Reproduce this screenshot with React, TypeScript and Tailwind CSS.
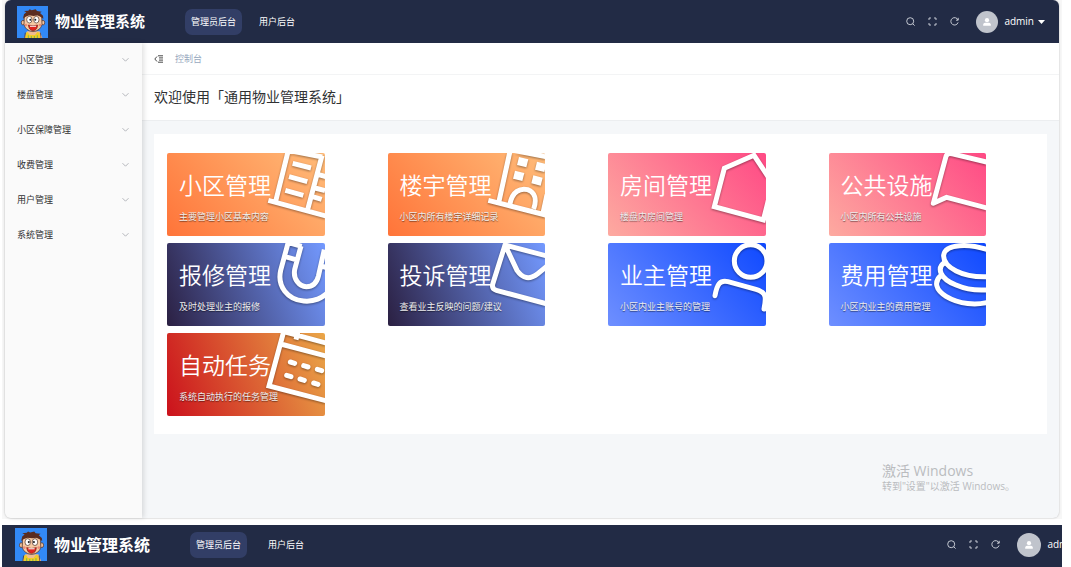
import React from 'react';
import clsx from 'clsx';

const menus = ['小区管理', '楼盘管理', '小区保障管理', '收费管理', '用户管理', '系统管理'];

const ORANGE = 'bg-[linear-gradient(50deg,#ff7439,#ffbc79)]';
const PINK = 'bg-[linear-gradient(50deg,#fdaaa0,#ff4a85)]';
const NIGHT = 'bg-[linear-gradient(70deg,#2b2042,#7399ff)]';
const BLUE = 'bg-[linear-gradient(50deg,#6e8fff,#0f49ff)]';
const RED = 'bg-[linear-gradient(70deg,#cb111c,#eaa648)]';

const cards = [
  {
    title: '小区管理',
    desc: '主要管理小区基本内容',
    color: ORANGE,
    art: (
      <path d="M70-8 33 141M10 142 190 191M70-8 172 12M171 8 128 170M83 31l55 14M72 71l55 15M61 112l54 15M158 64l30 8M150 105l30 8M140 130l30 9" />
    ),
  },
  {
    title: '楼宇管理',
    desc: '小区内所有楼宇详细记录',
    color: ORANGE,
    art: (
      <>
        <path d="M76-10 42 145M10 142 190 188M75-10 190 12M186 125l-12 55M75 152C82 116 106 104 128 110 150 118 156 140 146 168" />
        <g fill="white" stroke="none">
          <path d="m102 12 28 7-6 24-28-7zM156 26l28 7-6 24-28-7zM90 53l28 7-6 24-28-7zM145 67l28 7-6 24-28-7z" />
        </g>
      </>
    ),
  },
  {
    title: '房间管理',
    desc: '楼盘内房间管理',
    color: PINK,
    art: <path d="M55 46 144 7 200 92 172 201 25 161z" />,
  },
  {
    title: '公共设施',
    desc: '小区内所有公共设施',
    color: PINK,
    art: <path strokeLinejoin="round" d="M190 29 76 2Q64 0 60 10L22 151 62 133 190 167" />,
  },
  {
    title: '报修管理',
    desc: '及时处理业主的报修',
    color: NIGHT,
    art: (
      <path d="M70-3 47 82C36 130 68 170 116 174 150 177 170 165 190 148M108 9 89 80C84 108 102 130 124 131 146 131 156 116 160 100L178 20M58 40l42 12M68-2l42 12M164 68l26 7" />
    ),
  },
  {
    title: '投诉管理',
    desc: '查看业主反映的问题/建议',
    color: NIGHT,
    art: <path strokeLinejoin="round" d="M190 40 60 6 23 124Q20 138 34 142L190 184M60 6 96 82Q122 120 158 92L190 66" />,
  },
  {
    title: '业主管理',
    desc: '小区内业主账号的管理',
    color: BLUE,
    art: (
      <g strokeLinecap="round">
        <circle cx="134" cy="54" r="49" />
        <path d="M27 158C33 124 42 110 66 116L150 139C184 149 180 166 174 198" />
      </g>
    ),
  },
  {
    title: '费用管理',
    desc: '小区内业主的费用管理',
    color: BLUE,
    art: (
      <path d="M190 22C130 0 58 2 53 36 50 72 110 106 190 101M56 58C32 74 40 106 90 126 120 139 160 143 190 140M44 98C24 116 28 140 60 160 100 184 150 188 190 177" />
    ),
  },
  {
    title: '自动任务',
    desc: '系统自动执行的任务管理',
    color: RED,
    art: (
      <>
        <path d="M56-4 12 159 190 205M56-4 190 32M47 33 190 71M98-2 93 20" />
        <path strokeLinecap="round" strokeWidth="15" d="M76 87l13 4M116 98l13 4M157 109l13 4M65 127l13 4M105 138l13 4M146 150l13 4" />
      </>
    ),
  },
];

function Logo({ className }: { className?: string }) {
  return (
    <svg viewBox="0 0 93 96" className={className} preserveAspectRatio="none">
      <rect width="93" height="96" fill="#3289f6" />
      <path d="M30 76h38l8 20H22z" fill="#f0bd92" />
      <path d="M27 80l5-2 6 9h16l7-9 6 2 3 16H24z" fill="#f3cc25" />
      <path d="M25 80l-2 16M70 80l2 16" stroke="#4b2a20" strokeWidth="2" />
      <path d="M34 88v8M43 90v6M52 90v6M61 88v8" stroke="#39a86b" strokeWidth="2" />
      <ellipse cx="18" cy="50" rx="5" ry="7" fill="#f2c29c" stroke="#4b2a20" strokeWidth="2" />
      <ellipse cx="78" cy="50" rx="5" ry="7" fill="#f2c29c" stroke="#4b2a20" strokeWidth="2" />
      <path d="M22 30q26-10 52 0l1 25q-4 19-27 22-23-3-27-22z" fill="#f6c9a3" stroke="#4b2a20" strokeWidth="2" />
      <path d="M18 38l3-13 7-6-7-4 13-1 4-4 6 3 12-3 4 5 14 2-5 4 9 8 1 9-9-6-8-4-12 2-14-2-10 4z" fill="#5b2c20" />
      <ellipse cx="37" cy="41" rx="8" ry="10" fill="white" stroke="#4b2a20" strokeWidth="2" />
      <ellipse cx="58" cy="41" rx="8" ry="10" fill="white" stroke="#4b2a20" strokeWidth="2" />
      <circle cx="40" cy="41" r="3" fill="#222" />
      <circle cx="55" cy="41" r="3" fill="#222" />
      <circle cx="27" cy="57" r="4" fill="#ee8d79" />
      <circle cx="69" cy="57" r="4" fill="#ee8d79" />
      <path d="M34 57q14 5 28 0-1 16-14 17-12-1-14-17z" fill="#e02420" stroke="#7c231a" strokeWidth="2" />
      <path d="M39 59h18v3H39z" fill="white" />
    </svg>
  );
}

function TopBar({ large }: { large?: boolean }) {
  return (
    <header
      className={clsx(
        'flex items-center bg-[#222b45] text-white overflow-hidden',
        large ? 'h-[42px] pb-[3px] pl-[13px]' : 'h-[43px] rounded-t-md pl-3 pr-[14px]'
      )}
    >
      <Logo className={large ? 'w-8 h-[33px] shrink-0' : 'w-[31px] h-8 shrink-0'} />
      <div className={clsx('ml-[7px] font-bold whitespace-nowrap', large ? 'text-[16px]' : 'text-[15px]')}>
        物业管理系统
      </div>
      <nav className={clsx('ml-10 flex items-center text-[9px]', large ? 'gap-[15px]' : 'gap-[11px]')}>
        <button className="h-[26px] px-[6px] rounded-[7px] bg-[#323e66] whitespace-nowrap">管理员后台</button>
        <button className="h-[26px] px-[6px] whitespace-nowrap">用户后台</button>
      </nav>

      <div className={clsx('ml-auto flex items-center shrink-0', large && '-mr-[26px]')}>
        <div className="flex gap-[13px] text-[#d5d8e0]">
          <button aria-label="搜索">
            <svg viewBox="0 0 9 9" className="w-[9px] h-[9px]" fill="none" stroke="currentColor" strokeWidth=".9">
              <circle cx="4.2" cy="4.2" r="3.5" />
              <path d="M6.8 6.8 8.6 8.6" />
            </svg>
          </button>
          <button aria-label="全屏">
            <svg viewBox="0 0 9 9" className="w-[9px] h-[9px]" fill="none" stroke="currentColor" strokeWidth=".9">
              <path d="M1 3V1h2M6 1h2v2M8 6v2H6M3 8H1V6" />
            </svg>
          </button>
          <button aria-label="刷新">
            <svg viewBox="0 0 9 9" className="w-[9px] h-[9px]" fill="none" stroke="currentColor" strokeWidth=".9">
              <path d="M8 3A3.7 3.7 0 1 0 8.1 5.4M8.2.8v2.4H6" />
            </svg>
          </button>
        </div>
        <div
          className={clsx(
            'ml-[17px] rounded-full bg-[#c0c4cc] flex items-center justify-center',
            large ? 'size-6' : 'size-[22px]'
          )}
        >
          <svg viewBox="0 0 8 8" className="size-2" fill="white">
            <circle cx="4" cy="2.2" r="2.1" />
            <path d="M.2 7.8V6.4Q.4 4.8 2 4.8h4q1.6 0 1.8 1.6v1.4z" />
          </svg>
        </div>
        <button className="ml-[6px] flex items-center gap-1 text-[10px]">
          admin
          <svg viewBox="0 0 7 4" className="w-[7px] h-1" fill="white">
            <path d="M0 0h7L3.5 4z" />
          </svg>
        </button>
      </div>
    </header>
  );
}

function Sidebar() {
  return (
    <aside className="w-[137px] shrink-0 bg-[#fafafa] rounded-bl-md shadow-[2px_0_5px_rgba(0,0,0,0.12)] z-10">
      {menus.map((name) => (
        <button key={name} className="flex w-full h-[35px] items-center justify-between pl-3 pr-[13px] pb-px text-[9px] text-[#303133]">
          {name}
          <svg viewBox="0 0 7 7" className="size-[7px]" fill="none" stroke="#a3a6ac" strokeWidth=".8">
            <path d="M.5 1.2 3.5 4.2 6.5 1.2" />
          </svg>
        </button>
      ))}
    </aside>
  );
}

function Card({ title, desc, color, art }: (typeof cards)[number]) {
  return (
    <a href="#" className={clsx('relative block h-[83px] overflow-hidden rounded-[2px] pl-3 pt-4 text-white', color)}>
      <svg
        viewBox="0 0 180 249"
        className="absolute right-0 top-0 w-[60px] h-[83px] drop-shadow-[0_1px_1px_rgba(0,0,0,0.4)]"
        fill="none"
        stroke="white"
        strokeWidth="15"
      >
        {art}
      </svg>
      <div className="relative text-[23px] leading-8 font-[350] whitespace-nowrap">{title}</div>
      <div className="relative mt-[9px] text-[9px] leading-[14px] whitespace-nowrap text-[#eeeeee] [text-shadow:0_1px_1px_rgba(0,0,0,0.5)]">
        {desc}
      </div>
    </a>
  );
}

export default function App() {
  return (
    <div className="ml-[2px] mr-[9px] font-['Open_Sans','Noto_Sans_CJK_SC',sans-serif]">
      <div className="bg-[#f7f7f7] px-[3px] pb-px">
        <div className="rounded-md bg-[#f5f7f9] shadow-[0_0_2px_rgba(0,0,0,0.25)]">
          <TopBar />
          <div className="flex">
            <Sidebar />
            <main className="flex-1 min-w-0">
              <div className="flex items-center h-8 bg-white border-b border-[#f3f4f5] pl-3 text-[9px] text-[#97a8be]">
                <button aria-label="收起菜单">
                  <svg viewBox="0 0 9 8" className="w-[9px] h-2" fill="none" stroke="#333">
                    <path d="M3 1.5.8 4 3 6.5M4 .8h5M5 2.9h4M5 5.1h4M4 7.2h5" strokeWidth=".9" />
                  </svg>
                </button>
                <span className="ml-3">控制台</span>
              </div>
              <h1 className="flex items-center h-[46px] pb-[3px] bg-white border-b border-[#eceef0] pl-3 text-[14px] text-[#303133]">
                欢迎使用「通用物业管理系统」
              </h1>
              <div className="pt-[13px] pl-3 pr-3">
                <div className="grid grid-cols-4 gap-x-[63px] gap-y-[7px] bg-white pl-[13px] pr-[61px] pt-[19px] pb-[18px]">
                  {cards.map((card) => (
                    <Card key={card.title} {...card} />
                  ))}
                </div>
              </div>
              <div className="flex justify-end pt-7 pb-[25px] pr-11 text-[#babcbf]">
                <div>
                  <div className="text-[14px] leading-[18px]">激活 Windows</div>
                  <div className="text-[10px] leading-[13px]">转到"设置"以激活 Windows。</div>
                </div>
              </div>
            </main>
          </div>
        </div>
      </div>
      <div className="mt-[6px]">
        <TopBar large />
      </div>
    </div>
  );
}
